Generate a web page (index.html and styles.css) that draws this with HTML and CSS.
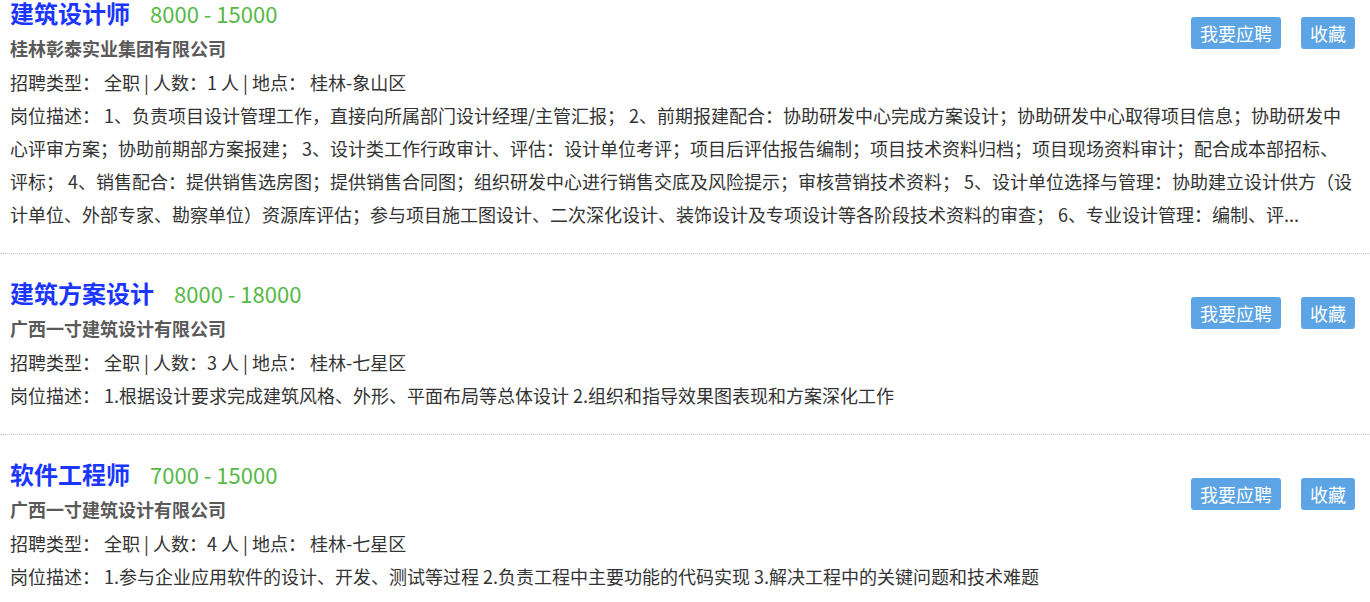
FILE: index.html
```html
<!DOCTYPE html>
<html lang="zh-CN">
<head>
<meta charset="utf-8">
<title>招聘信息</title>
<link rel="stylesheet" href="styles.css">
</head>
<body>
<div class="jobs">
  <div class="job">
    <div class="actions">
      <a class="btn btn-apply">我要应聘</a>
      <a class="btn btn-fav">收藏</a>
    </div>
    <div class="job-head"><span class="job-title">建筑设计师</span><span class="salary">8000 - 15000</span></div>
    <div class="company">桂林彰泰实业集团有限公司</div>
    <div class="meta">招聘类型： 全职 | 人数：1 人 | 地点： 桂林-象山区</div>
    <div class="desc">岗位描述： 1、负责项目设计管理工作，直接向所属部门设计经理/主管汇报； 2、前期报建配合：协助研发中心完成方案设计；协助研发中心取得项目信息；协助研发中心评审方案；协助前期部方案报建； 3、设计类工作行政审计、评估：设计单位考评；项目后评估报告编制；项目技术资料归档；项目现场资料审计；配合成本部招标、评标； 4、销售配合：提供销售选房图；提供销售合同图；组织研发中心进行销售交底及风险提示；审核营销技术资料； 5、设计单位选择与管理：协助建立设计供方（设计单位、外部专家、勘察单位）资源库评估；参与项目施工图设计、二次深化设计、装饰设计及专项设计等各阶段技术资料的审查； 6、专业设计管理：编制、评...</div>
  </div>
  <div class="job">
    <div class="actions">
      <a class="btn btn-apply">我要应聘</a>
      <a class="btn btn-fav">收藏</a>
    </div>
    <div class="job-head"><span class="job-title">建筑方案设计</span><span class="salary">8000 - 18000</span></div>
    <div class="company">广西一寸建筑设计有限公司</div>
    <div class="meta">招聘类型： 全职 | 人数：3 人 | 地点： 桂林-七星区</div>
    <div class="desc">岗位描述： 1.根据设计要求完成建筑风格、外形、平面布局等总体设计 2.组织和指导效果图表现和方案深化工作</div>
  </div>
  <div class="job">
    <div class="actions">
      <a class="btn btn-apply">我要应聘</a>
      <a class="btn btn-fav">收藏</a>
    </div>
    <div class="job-head"><span class="job-title">软件工程师</span><span class="salary">7000 - 15000</span></div>
    <div class="company">广西一寸建筑设计有限公司</div>
    <div class="meta">招聘类型： 全职 | 人数：4 人 | 地点： 桂林-七星区</div>
    <div class="desc">岗位描述： 1.参与企业应用软件的设计、开发、测试等过程 2.负责工程中主要功能的代码实现 3.解决工程中的关键问题和技术难题</div>
  </div>
</div>
</body>
</html>
```

FILE: styles.css
```css
html, body {
  margin: 0;
  padding: 0;
  background: #ffffff;
}

body {
  font-family: "Noto Sans CJK SC", "Noto Sans", sans-serif;
  font-size: 18px;
  color: #333333;
  overflow: hidden;
}

.job {
  padding: 24px 17px 22px 10px;
  border-bottom: 1px dotted #c8c8c8;
}

.job:first-child {
  padding-top: 0;
}

.actions {
  float: right;
  display: flex;
  gap: 20px;
  margin-top: 19px;
  margin-right: -2px;
}

.job:first-child .actions {
  margin-top: 17px;
}

.btn {
  display: block;
  height: 32px;
  line-height: 32px;
  padding: 0 9px;
  font-size: 18px;
  color: #ffffff;
  background: #5ca4e4;
  border-radius: 3px;
  cursor: pointer;
}

.job-head {
  line-height: 30px;
  height: 30px;
  white-space: nowrap;
}

.job:first-child .job-head {
  line-height: 26px;
  height: 28px;
}

.job-title {
  font-size: 24px;
  font-weight: bold;
  color: #1a36ff;
}

.salary {
  margin-left: 20px;
  font-size: 22px;
  color: #56b947;
}

.company {
  margin-top: 5px;
  line-height: 30px;
  font-size: 18px;
  font-weight: bold;
  color: #5a5a5a;
}

.meta {
  margin-top: 3px;
  line-height: 33px;
}

.desc {
  line-height: 33px;
}
```
